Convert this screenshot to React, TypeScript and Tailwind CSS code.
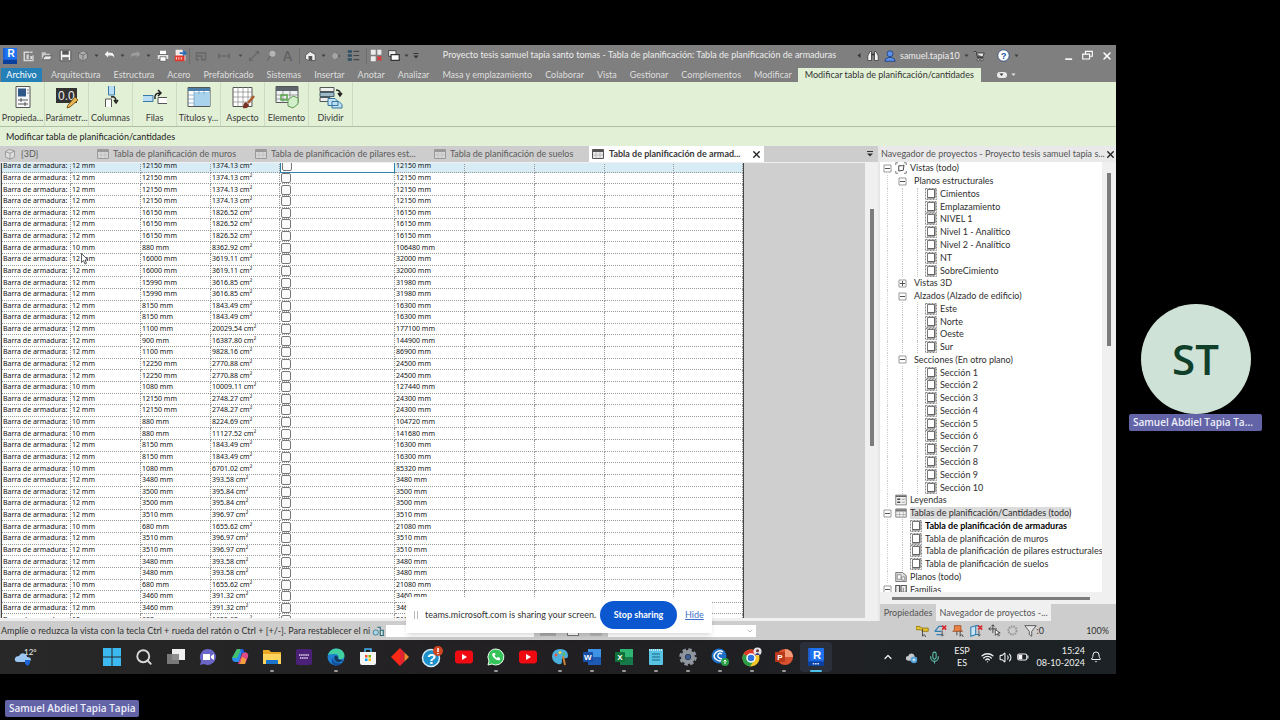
import React from "react";
import { Wifi, Volume2, Bell, ChevronUp, ChevronDown, Search, Mic, X } from "lucide-react";

type Bar = [diameter: string, length: string, area: string, total: string];

const bars: Bar[] = [
  ["12", "12150", "1374.13", "12150"],
  ["12", "12150", "1374.13", "12150"],
  ["12", "12150", "1374.13", "12150"],
  ["12", "12150", "1374.13", "12150"],
  ["12", "16150", "1826.52", "16150"],
  ["12", "16150", "1826.52", "16150"],
  ["12", "16150", "1826.52", "16150"],
  ["10", "880", "8362.92", "106480"],
  ["12", "16000", "3619.11", "32000"],
  ["12", "16000", "3619.11", "32000"],
  ["12", "15990", "3616.85", "31980"],
  ["12", "15990", "3616.85", "31980"],
  ["12", "8150", "1843.49", "16300"],
  ["12", "8150", "1843.49", "16300"],
  ["12", "1100", "20029.54", "177100"],
  ["12", "900", "16387.80", "144900"],
  ["12", "1100", "9828.16", "86900"],
  ["12", "12250", "2770.88", "24500"],
  ["12", "12250", "2770.88", "24500"],
  ["10", "1080", "10009.11", "127440"],
  ["12", "12150", "2748.27", "24300"],
  ["12", "12150", "2748.27", "24300"],
  ["10", "880", "8224.69", "104720"],
  ["10", "880", "11127.52", "141680"],
  ["12", "8150", "1843.49", "16300"],
  ["12", "8150", "1843.49", "16300"],
  ["10", "1080", "6701.02", "85320"],
  ["12", "3480", "393.58", "3480"],
  ["12", "3500", "395.84", "3500"],
  ["12", "3500", "395.84", "3500"],
  ["12", "3510", "396.97", "3510"],
  ["10", "680", "1655.62", "21080"],
  ["12", "3510", "396.97", "3510"],
  ["12", "3510", "396.97", "3510"],
  ["12", "3480", "393.58", "3480"],
  ["12", "3480", "393.58", "3480"],
  ["10", "680", "1655.62", "21080"],
  ["12", "3460", "391.32", "3460"],
  ["12", "3460", "391.32", "3460"],
  ["10", "680", "1655.62", "21080"],
];

type Node = {
  label: string;
  level: number;
  toggle?: "open" | "closed";
  icon?: "views" | "view" | "legend" | "schedule" | "sheets" | "families";
  bold?: boolean;
  selected?: boolean;
};

const tree: Node[] = [
  { label: "Vistas (todo)", level: 0, toggle: "open", icon: "views" },
  { label: "Planos estructurales", level: 1, toggle: "open" },
  { label: "Cimientos", level: 2, icon: "view" },
  { label: "Emplazamiento", level: 2, icon: "view" },
  { label: "NIVEL 1", level: 2, icon: "view" },
  { label: "Nivel 1 - Analítico", level: 2, icon: "view" },
  { label: "Nivel 2 - Analítico", level: 2, icon: "view" },
  { label: "NT", level: 2, icon: "view" },
  { label: "SobreCimiento", level: 2, icon: "view" },
  { label: "Vistas 3D", level: 1, toggle: "closed" },
  { label: "Alzados (Alzado de edificio)", level: 1, toggle: "open" },
  { label: "Este", level: 2, icon: "view" },
  { label: "Norte", level: 2, icon: "view" },
  { label: "Oeste", level: 2, icon: "view" },
  { label: "Sur", level: 2, icon: "view" },
  { label: "Secciones (En otro plano)", level: 1, toggle: "open" },
  { label: "Sección 1", level: 2, icon: "view" },
  { label: "Sección 2", level: 2, icon: "view" },
  { label: "Sección 3", level: 2, icon: "view" },
  { label: "Sección 4", level: 2, icon: "view" },
  { label: "Sección 5", level: 2, icon: "view" },
  { label: "Sección 6", level: 2, icon: "view" },
  { label: "Sección 7", level: 2, icon: "view" },
  { label: "Sección 8", level: 2, icon: "view" },
  { label: "Sección 9", level: 2, icon: "view" },
  { label: "Sección 10", level: 2, icon: "view" },
  { label: "Leyendas", level: 0, icon: "legend" },
  { label: "Tablas de planificación/Cantidades (todo)", level: 0, toggle: "open", icon: "schedule", selected: true },
  { label: "Tabla de planificación de armaduras", level: 1, icon: "view", bold: true },
  { label: "Tabla de planificación de muros", level: 1, icon: "view" },
  { label: "Tabla de planificación de pilares estructurales", level: 1, icon: "view" },
  { label: "Tabla de planificación de suelos", level: 1, icon: "view" },
  { label: "Planos (todo)", level: 0, icon: "sheets" },
  { label: "Familias", level: 0, toggle: "open", icon: "families" },
];

const ribbonTabs = [
  "Arquitectura", "Estructura", "Acero", "Prefabricado", "Sistemas", "Insertar", "Anotar", "Analizar",
  "Masa y emplazamiento", "Colaborar", "Vista", "Gestionar", "Complementos", "Modificar",
];

const Svg = ({ size = 14, box = 16, children }: { size?: number; box?: number; children: React.ReactNode }) => (
  <svg width={size} height={size} viewBox={`0 0 ${box} ${box}`} fill="none" className="shrink-0" aria-hidden="true">
    {children}
  </svg>
);

const Caret = ({ color = "#3c3c3c" }: { color?: string }) => (
  <svg width="5" height="4" viewBox="0 0 5 4" className="shrink-0" aria-hidden="true">
    <path d="M0.5 0.5h4L2.5 3z" fill={color} />
  </svg>
);

const RevitLogo = ({ size = 16, badge = false }: { size?: number; badge?: boolean }) => (
  <Svg size={size}>
    <path d="M1 0h13l1 1v14H1z" fill="#1a62d6" />
    <path d="M1 12h14v4H1z" fill="#0b3f9c" />
    <path d="M3 0h12v11H3z" fill="#1f72ef" />
    <text x="5.4" y="9.4" fontSize="10" fontWeight="700" fill="#fff" fontFamily="Liberation Sans, sans-serif">R</text>
    {badge && <path d="M5 14h6" stroke="#cfe0ff" strokeWidth="1.500" strokeDasharray="1.500 .6" />}
  </Svg>
);

/* Quick access toolbar */
const quickTools: { name: string; slot: string; icon: React.ReactNode }[] = [
  { name: "Inicio", slot: "w-[19px]", icon: <Svg size={12}><path d="M2 2h8v2H4v9h10V7h1.500v8H2z" fill="#d6d6d6" /><path d="M6 6h3v6H6zM11 8h3v4h-3z" fill="#d6d6d6" /><path d="M11 3h3" stroke="#d6d6d6" strokeWidth="2" /></Svg> },
  { name: "Abrir", slot: "w-[19px]", icon: <Svg size={12}><path d="M1 3h5l1 2h5v2H4l-3 6z" fill="#c8c8c8" /><path d="M5 8h10l-3 5H2z" fill="#e8e8e8" stroke="#555" /></Svg> },
  { name: "Guardar", slot: "w-[18px]", icon: <Svg size={13}><path d="M1.500 1.500h12l1 1v12h-13z" fill="#f2f2f2" stroke="#444" /><path d="M4 2h8v5H4z" fill="#555" /><path d="M4 10h8v4H4z" fill="#777" /></Svg> },
  { name: "Sincronizar", slot: "w-[17px]", icon: <Svg size={12}><path d="M8 1l6 3v7l-6 4-6-4V4z" fill="#aaa" stroke="#666" /><path d="M8 7l6-3M8 7v8M8 7L2 4" stroke="#666" /></Svg> },
  { name: "Opciones de sincronización", slot: "w-[11px]", icon: <Caret /> },
  { name: "Deshacer", slot: "w-[15px]", icon: <Svg size={11}><path d="M1 6l5-5v3h4q5 0 5 8q-1-4-5-4H6v3z" fill="#f4f4f4" /></Svg> },
  { name: "Lista deshacer", slot: "w-[11px]", icon: <Caret /> },
  { name: "Rehacer", slot: "w-[15px]", icon: <Svg size={11}><path d="M15 6l-5-5v3H6q-5 0-5 8q1-4 5-4h4v3z" fill="#9d9d9d" /></Svg> },
  { name: "Lista rehacer", slot: "w-[11px]", icon: <Caret /> },
  { name: "Imprimir", slot: "w-[17px]", icon: <Svg size={12}><path d="M4 1h8v5H4z" fill="#fff" /><path d="M1 6h14v6H1z" fill="#e6e6e6" /><path d="M4 9h8v6H4z" fill="#fff" stroke="#555" /><path d="M1 6h14" stroke="#555" /></Svg> },
  { name: "PDF", slot: "w-[18px]", icon: <Svg size={13}><path d="M2 1h8l4 4v9H2z" fill="#f4e9e6" /><path d="M1 8h12v7H1z" fill="#e2392b" /><path d="M7 5h7M11 2l4 3-4 3" stroke="#2e6fb5" strokeWidth="2" /><path d="M3 10v3M6 10v3M9 10v3" stroke="#fff" /></Svg> },
];

const quickTools2: { name: string; slot: string; icon: React.ReactNode }[] = [
  { name: "Medir", slot: "w-[22px]", icon: <Svg size={12}><path d="M2 4h12v9H9V8H2zM2 4v9h3" stroke="#676767" strokeWidth="2" /></Svg> },
  { name: "Cota", slot: "w-[23px]", icon: <Svg size={12}><path d="M1 5v6M15 5v6M1 8h14" stroke="#5f5f5f" strokeWidth="1.500" /></Svg> },
  { name: "Lista de cotas", slot: "w-[10px]", icon: <Caret color="#4a4a4a" /> },
  { name: "Alinear", slot: "w-[17px]", icon: <Svg size={12}><path d="M2 14L14 2M10 2h4v4M2 10v4h4" stroke="#666" strokeWidth="1.500" /></Svg> },
  { name: "Etiqueta", slot: "w-[18px]", icon: <Svg size={12}><circle cx="10" cy="5" r="4" fill="#b5b5b5" /><path d="M7 8l-4 6" stroke="#666" strokeWidth="1.500" /></Svg> },
  { name: "Texto", slot: "w-[15px]", icon: <span className="text-[13px] font-bold leading-3 text-[#616161]">A</span> },
];

const quickTools3: { name: string; slot: string; icon: React.ReactNode }[] = [
  { name: "Vista 3D", slot: "w-[19px]", icon: <Svg size={12}><path d="M2 7l6-5 7 4v8H6l-4-2z" fill="#eee" stroke="#444" /><path d="M6 8h5v6H6z" fill="#555" /></Svg> },
  { name: "Lista de vistas", slot: "w-[8px]", icon: <Caret /> },
  { name: "Sección", slot: "w-[17px]", icon: <Svg size={12}><path d="M8 3l6 5-6 5z" fill="#5c5c5c" /><circle cx="7" cy="8" r="4" fill="#a2a2a2" /></Svg> },
  { name: "Líneas finas", slot: "w-[18px]", icon: <Svg size={13}><path d="M1 3h5M1 8h5M1 13h5" stroke="#2d4f66" strokeWidth="3" /><path d="M8 3h7M8 8h7M8 13h7" stroke="#454545" strokeWidth="1.500" /></Svg> },
];

const quickTools4: { name: string; slot: string; icon: React.ReactNode }[] = [
  { name: "Cerrar inactivas", slot: "w-[18px]", icon: <Svg size={13}><path d="M1 1h6v6H1zM9 1h5v6H9zM1 9h6v6H1z" fill="#ececec" /><path d="M9 9l5 5M14 9l-5 5" stroke="#d83a3a" strokeWidth="2" /></Svg> },
  { name: "Cambiar ventana", slot: "w-[17px]", icon: <Svg size={13}><path d="M2 2h9v7H2z" fill="#eee" stroke="#333" /><path d="M5 7h10v7H5z" fill="#fff" stroke="#333" strokeWidth="1.500" /></Svg> },
  { name: "Lista de ventanas", slot: "w-[8px]", icon: <Caret /> },
  { name: "Personalizar", slot: "w-[12px]", icon: <Svg size={8}><path d="M3 3h10" stroke="#333" strokeWidth="2" /><path d="M3 7h10l-5 6z" fill="#333" /></Svg> },
];

const ToolGroup = ({ tools }: { tools: { name: string; slot: string; icon: React.ReactNode }[] }) => (
  <div className="flex items-center">
    {tools.map((tool) => (
      <button key={tool.name} aria-label={tool.name} className={`${tool.slot} h-5 flex items-center justify-center`}>
        {tool.icon}
      </button>
    ))}
  </div>
);

const Divider = () => <div className="h-4 w-px bg-[#6d6d6d]" />;

const TitleBar = () => (
  <header className="flex h-[23px] shrink-0 items-center bg-[#7f7f7f] pb-[2px] text-[#ececec]">
    <div className="flex shrink-0 items-center pl-[2px]">
      <RevitLogo />
      <ToolGroup tools={quickTools} />
      <Divider />
      <ToolGroup tools={quickTools2} />
      <div className="w-1" />
      <Divider />
      <ToolGroup tools={quickTools3} />
      <div className="w-1" />
      <Divider />
      <ToolGroup tools={quickTools4} />
    </div>
    <h1 className="min-w-0 flex-1 truncate pb-[2px] text-center text-[9px] leading-3">
      Proyecto tesis samuel tapia santo tomas - Tabla de planificación: Tabla de planificación de armaduras
    </h1>
    <div className="flex w-[259px] shrink-0 items-center">
      <svg width="4" height="5" viewBox="0 0 4 5" aria-hidden="true"><path d="M3.500 0v5L0.500 2.500z" fill="#333" /></svg>
      <button aria-label="Buscar" className="ml-1 flex w-4 justify-center">
        <Svg size={12}><path d="M2 6l2-4h2v12H1V8zM14 6l-2-4h-2v12h5V8z" fill="#f3f3f3" stroke="#333" /><path d="M6 6h4" stroke="#333" strokeWidth="2" /></Svg>
      </button>
      <button className="ml-[3px] flex items-center gap-1 text-[9px] leading-3">
        <Svg size={12}><circle cx="8" cy="5" r="4" fill="#5d90e8" stroke="#16377a" /><path d="M1 15q0-4 5-5h4q5 1 5 5z" fill="#5d90e8" stroke="#16377a" /></Svg>
        samuel.tapia10
        <Caret />
      </button>
      <button aria-label="Tienda" className="ml-1 flex">
        <Svg size={12}><path d="M1 2h3l2 8h8M4 4h11l-2 5H6" fill="#eee" stroke="#333" strokeWidth="1.200" /><circle cx="7" cy="13" r="1.500" fill="#eee" stroke="#333" /><circle cx="12" cy="13" r="1.500" fill="#eee" stroke="#333" /></Svg>
      </button>
      <button aria-label="Ayuda" className="ml-3 flex items-center gap-1">
        <Svg size={13}><circle cx="8" cy="8" r="7" fill="#fff" stroke="#26457c" /><text x="5" y="12" fontSize="11" fontWeight="700" fill="#1c4f9f" fontFamily="Liberation Sans, sans-serif">?</text></Svg>
        <Caret />
      </button>
      <div className="ml-auto flex items-center gap-2 pr-[3px]">
        <button aria-label="Minimizar"><Svg size={10}><path d="M2 13h11" stroke="#fff" strokeWidth="2.500" /></Svg></button>
        <button aria-label="Restaurar"><Svg size={11}><path d="M5 5V2h10v7h-4M1 6h10v7H1z" stroke="#fff" strokeWidth="1.600" /></Svg></button>
        <button aria-label="Cerrar"><X size={12} strokeWidth={3} color="#fff" /></button>
      </div>
    </div>
  </header>
);

const RibbonTabs = () => (
  <nav className="flex h-[14px] shrink-0 items-stretch bg-[#7f7f7f] pl-px text-[9px] leading-[14px] text-[#dedede]">
    <button className="w-[41px] bg-[#2580b8] text-white">Archivo</button>
    <div className="flex pl-[2px]">
      {ribbonTabs.map((tab) => (
        <button key={tab} className="pr-[6px] pl-[7px] whitespace-nowrap">{tab}</button>
      ))}
    </div>
    <button className="bg-[#e2f0d6] px-[7px] whitespace-nowrap text-[#333]">Modificar tabla de planificación/cantidades</button>
    <button aria-label="Minimizar cinta" className="ml-4 flex items-center gap-1">
      <span className="flex h-[6px] w-[10px] items-center justify-center rounded-sm bg-[#ececec]"><Caret /></span>
      <Caret color="#e5e5e5" />
    </button>
  </nav>
);

const ribbonTools: { label: string; icon: React.ReactNode }[] = [
  {
    label: "Propieda...",
    icon: <Svg size={24} box={24}><path d="M5 1.500h14v21H5z" fill="#f5f7f9" stroke="#555" /><path d="M7 3.500h8v8H7z" fill="#2f5787" /><path d="M16 5h2M16 8h2" stroke="#888" /><path d="M7 15h10M7 19h10M10 13v4M14 17v4" stroke="#555" /></Svg>,
  },
  {
    label: "Parámetr...",
    icon: <Svg size={24} box={24}><path d="M1 3h21v15H1z" fill="#333" /><text x="3" y="14.500" fontSize="12" fill="#eee" fontFamily="Liberation Sans, sans-serif">0.0</text><path d="M13 20l7-8 3 3-8 7-3 1z" fill="#e9b652" stroke="#7c5a1e" /></Svg>,
  },
  {
    label: "Columnas",
    icon: <Svg size={24} box={24}><path d="M9.500 1v9h6V1" fill="#b9ddf3" stroke="#3a78a8" /><path d="M6.500 22v-8h6v8" fill="#fff" stroke="#555" /><path d="M12 12q5-1 5 4M15 15l2 3 2-3" stroke="#222" strokeWidth="1.500" /></Svg>,
  },
  {
    label: "Filas",
    icon: <Svg size={24} box={24}><path d="M0 10.500h10v6H0" fill="#b9ddf3" stroke="#3a78a8" /><path d="M24 12.500h-9v6h9" fill="#fff" stroke="#555" /><path d="M12 14q-1-6 5-6M15 5l3 3-3 3" stroke="#222" strokeWidth="1.500" /></Svg>,
  },
  {
    label: "Títulos y...",
    icon: <Svg size={24} box={24}><path d="M1 2.500h22v19H1z" fill="#fff" stroke="#555" /><path d="M1 3h22v3H1z" fill="#4a7da8" /><path d="M7 7h16v14H7z" fill="#a9d2ec" /><path d="M1 10h6M1 14h6M1 18h6M7 6v15M12 6v3M17 6v3" stroke="#6b9cbc" strokeWidth=".7" /></Svg>,
  },
  {
    label: "Aspecto",
    icon: <Svg size={24} box={24}><path d="M2 2.500h19v19H2z" fill="#fff" stroke="#555" /><path d="M2 7h19M2 12h19M2 17h19M7 2v19M12 2v19M17 2v19" stroke="#888" strokeWidth=".7" /><path d="M23 11l-6 7" stroke="#a65a2d" strokeWidth="2.500" /><path d="M12 23q0-5 3-6l3 3q-1 4-6 3z" fill="#7a3322" /></Svg>,
  },
  {
    label: "Elemento",
    icon: <Svg size={24} box={24}><path d="M1 1.500h22v16H1z" fill="#eef2f3" stroke="#555" /><path d="M1 2h22v4H1z" fill="#5c6569" /><path d="M1 10h22M1 14h22M8 6v12M15 6v12" stroke="#777" strokeWidth=".7" /><path d="M6 10h6v5H6z" stroke="#59a84b" strokeWidth="1.500" /><path d="M13 15l5-4 5 2v6l-5 4-5-2z" fill="#d3efc9" stroke="#5e9b52" /></Svg>,
  },
  {
    label: "Dividir",
    icon: <Svg size={24} box={24}><path d="M1 2.500h14v4H1zM1 12.500h10v4H1z" fill="#eef0ef" stroke="#555" /><path d="M1 7.500h14v4H1z" fill="#9fb9c6" stroke="#44606e" /><path d="M9 13.500h7l3 3v4H9zM13 16.500h7l3 3v3.500H13z" fill="#bfe0f5" stroke="#35759f" /><path d="M17 5q5 0 4 5M19 8l2 3 2-3" stroke="#222" strokeWidth="1.500" /></Svg>,
  },
];

const Ribbon = () => (
  <section className="shrink-0 bg-[#e2f0d6] text-[#3a3a3a]">
    <div className="flex h-[45px] border-b border-[#aebfa5] pl-px">
      {ribbonTools.map((tool) => (
        <button key={tool.label} className="flex w-11 flex-col items-center justify-between border-r border-[#cddbc2] pt-[3px] pb-[2px] text-[9px] leading-3">
          {tool.icon}
          <span className="whitespace-nowrap">{tool.label}</span>
        </button>
      ))}
    </div>
    <p className="h-[19px] pl-[6px] text-[9px] leading-5 text-[#222]">Modificar tabla de planificación/cantidades</p>
  </section>
);

const ScheduleIcon = ({ active = false }: { active?: boolean }) => (
  <svg width="12" height="10" viewBox="0 0 12 10" fill="none" className="shrink-0" aria-hidden="true">
    <path d="M.5.5h11v9H.5z" fill={active ? "#e9e9e9" : "#d6d6d6"} stroke={active ? "#555" : "#9b9b9b"} />
    <path d="M1 1h10v2H1z" fill={active ? "#555" : "#999"} />
    <path d="M1 6h10M4 3v6M8 3v6" stroke={active ? "#aaa" : "#bbb"} strokeWidth=".6" />
  </svg>
);

const documentTabs = [
  { label: "Tabla de planificación de muros", slot: "w-[158px]" },
  { label: "Tabla de planificación de pilares est...", slot: "w-[179px]" },
  { label: "Tabla de planificación de suelos", slot: "w-[159px]" },
];

const DocumentTabs = () => (
  <nav className="flex h-4 shrink-0 items-stretch bg-[#cdcdcd] text-[9px] leading-4 text-[#5c5c5c]">
    <button className="flex w-[93px] items-center gap-[5px] pl-1">
      <Svg size={12}><path d="M2 5l5-3 7 2v8l-6 3-6-3z" fill="#ddd" stroke="#8a8a8a" /><path d="M2 5l6 2 6-3M8 7v8" stroke="#8a8a8a" /></Svg>
      {"{3D}"}
    </button>
    {documentTabs.map((tab) => (
      <button key={tab.label} className={`${tab.slot} flex items-center gap-1 pl-1 whitespace-nowrap`}>
        <ScheduleIcon />
        {tab.label}
      </button>
    ))}
    <button className="flex w-[175px] items-center gap-[5px] bg-white pl-[3px] font-bold whitespace-nowrap text-[#3a3a3a]">
      <ScheduleIcon active />
      Tabla de planificación de armad...
      <X size={11} strokeWidth={3} color="#222" className="mr-[2px] ml-auto" />
    </button>
    <button aria-label="Lista de pestañas" className="ml-auto flex items-center pr-1">
      <Svg size={8}><path d="M2 3h12" stroke="#333" strokeWidth="2" /><path d="M2 7h12l-6 6z" fill="#333" /></Svg>
    </button>
  </nav>
);

const cell = "border-r border-b border-dotted border-[#999] p-0 pl-px align-middle";

const ScheduleTable = () => (
  <table className="-mt-[2px] ml-px h-[465px] w-[743px] shrink-0 table-fixed border-separate border-spacing-0 border-x border-[#444] bg-white font-['Noto_Sans',sans-serif] text-[7px] leading-[10px] whitespace-nowrap text-[#111]">
    <colgroup>
      <col className="w-[69px]" />
      <col className="w-[70px]" />
      <col className="w-[70px]" />
      <col className="w-[69px]" />
      <col className="w-[115px]" />
      <col className="w-[70px]" />
      <col className="w-[70px]" />
      <col className="w-[70px]" />
      <col className="w-[69px]" />
      <col />
    </colgroup>
    <tbody>
      {bars.map(([diameter, length, area, total], i) => (
        <tr key={i} className={i === 0 ? "bg-[#d8ecf5]" : ""}>
          <td className={cell}>Barra de armadura:</td>
          <td className={cell}>{diameter} mm</td>
          <td className={cell}>{length} mm</td>
          <td className={cell}>{area} cm²</td>
          <td className={i === 0 ? "border-r border-b border-l border-[#2f82ac] bg-white p-0 pl-px" : cell}>
            <input
              type="checkbox"
              aria-label={`Seleccionar fila ${i + 1}`}
              className="block size-[10px] appearance-none rounded-[2px] border border-[#777] bg-[#fafafa]"
            />
          </td>
          <td className={cell}>{total} mm</td>
          <td className={cell} />
          <td className={cell} />
          <td className={cell} />
          <td className={cell} />
        </tr>
      ))}
    </tbody>
  </table>
);

const ScheduleView = () => (
  <main className="flex min-w-0 flex-1 flex-col">
    <DocumentTabs />
    <div className="relative mt-px mb-[3px] flex min-h-0 flex-1 overflow-hidden bg-[#cfcfcf]">
      <ScheduleTable />
      <svg width="8" height="12" viewBox="0 0 8 12" className="absolute top-[90px] left-[81px]" aria-hidden="true">
        <path d="M.5.5v9l2-2 1.500 3.500 1.500-.7L4 7h3z" fill="#fff" stroke="#333" strokeWidth=".8" />
      </svg>
      <div className="ml-auto flex w-[13px] justify-center bg-[#f0f0f0]">
        <div className="mt-[46px] h-[237px] w-1 bg-[#7c7c7c]" />
      </div>
    </div>
  </main>
);

const nodeIcons = {
  views: (
    <Svg size={12}><path d="M1 4V1h3M12 1h3v3M15 12v3h-3M4 15H1v-3" stroke="#555" /><path d="M5 5h5l2-1-1 7-6 1z" stroke="#444" strokeWidth="1.300" /></Svg>
  ),
  view: (
    <Svg size={12} box={12}><path d="M.5.5h11v11H.5z" stroke="#8a8a8a" strokeDasharray="2 1" /><path d="M2.500 1.500h7v8h-7z" fill="#fff" stroke="#777" /><path d="M2 10h8V1" stroke="#555" /></Svg>
  ),
  legend: (
    <Svg size={12}><path d="M1 1.500h14v13H1z" fill="#f2f2f2" stroke="#666" /><path d="M1 2h14v2H1z" fill="#666" /><path d="M3 7h4M3 11h4" stroke="#444" strokeWidth="2" /><path d="M9 7h4M9 11h4" stroke="#888" /></Svg>
  ),
  schedule: (
    <Svg size={12}><path d="M1 2.500h14v11H1z" fill="#f2f2f2" stroke="#666" /><path d="M1 3h14v3H1z" fill="#777" /><path d="M1 10h14M6 6v7M11 6v7" stroke="#aaa" /></Svg>
  ),
  sheets: (
    <Svg size={12}><path d="M1 2h9l5 4v8H1z" fill="#ddd" stroke="#555" /><path d="M3 5h5v6H3zM9 8h4v4H9z" fill="#fff" stroke="#777" /></Svg>
  ),
  families: (
    <Svg size={12}><path d="M1 2h5v12H1zM8 2h7v9H8z" fill="#eee" stroke="#555" strokeWidth="1.500" /><path d="M11 5v6" stroke="#555" /></Svg>
  ),
};

const Toggle = ({ state }: { state: "open" | "closed" }) => (
  <svg width="9" height="9" viewBox="0 0 9 9" fill="none" className="shrink-0" aria-hidden="true">
    <path d="M1 1h7v7H1z" fill="#fff" stroke="#999" />
    <path d={state === "open" ? "M2 4.500h5" : "M2 4.500h5M4.500 2v5"} stroke="#555" />
  </svg>
);

const TreeRow = ({ node }: { node: Node }) => (
  <li className="flex min-h-0 flex-1 items-center whitespace-nowrap">
    <span className="flex w-[15px] shrink-0 justify-center self-stretch">
      {node.level === 0 && node.toggle ? (
        <span className="flex items-center"><Toggle state={node.toggle} /></span>
      ) : (
        <span className="border-l border-dotted border-[#d0d0d0]" />
      )}
    </span>
    {node.level > 0 && (
      <span className="flex w-[15px] shrink-0 justify-center self-stretch">
        {node.toggle ? (
          <span className="flex items-center"><Toggle state={node.toggle} /></span>
        ) : (
          <span className="border-l border-dotted border-[#c4c4c4]" />
        )}
      </span>
    )}
    {node.level === 2 && (
      <span className="flex w-[15px] shrink-0 justify-center self-stretch">
        <span className="border-l border-dotted border-[#c4c4c4]" />
      </span>
    )}
    {node.icon && <span className="mr-[3px] shrink-0">{nodeIcons[node.icon]}</span>}
    {!node.icon && <span className="mr-[2px] w-[2px]" />}
    <span className={`${node.bold ? "font-bold text-black" : ""} ${node.selected ? "bg-[#dcdcdc]" : ""}`}>{node.label}</span>
  </li>
);

const ProjectBrowser = () => (
  <aside className="flex w-[238px] shrink-0 flex-col border-l-2 border-[#e6e6e6] bg-[#f0f0f0] text-[9px] text-[#2f2f2f]">
    <div className="flex h-4 shrink-0 items-center justify-between bg-[#e9e9e9] pr-px pl-px text-[#555]">
      <h2 className="leading-4 whitespace-nowrap">Navegador de proyectos - Proyecto tesis samuel tapia s...</h2>
      <button aria-label="Cerrar navegador"><X size={11} strokeWidth={3} color="#222" /></button>
    </div>
    <div className="flex min-h-0 flex-1">
      <div className="min-w-0 flex-1 overflow-hidden bg-white">
        <ul className="flex h-[434px] flex-col leading-3">
          {tree.map((node) => (
            <TreeRow key={node.label} node={node} />
          ))}
        </ul>
      </div>
      <div className="flex w-[14px] justify-center">
        <div className="mt-[11px] h-[173px] w-1 bg-[#7c7c7c]" />
      </div>
    </div>
    <div className="flex h-3 shrink-0 items-center pr-[26px] pl-3">
      <div className="h-[3px] flex-1 bg-[#7c7c7c]" />
    </div>
    <div className="flex h-[17px] shrink-0 bg-[#cdcdcd] leading-4 text-[#555]">
      <button className="w-[56px]">Propiedades</button>
      <button className="w-[115px] bg-[#f0f0f0] whitespace-nowrap">Navegador de proyectos -...</button>
    </div>
  </aside>
);

const statusTools: { name: string; icon: React.ReactNode }[] = [
  { name: "Seleccionar vínculos", icon: <Svg size={13}><path d="M0 3h5l2 2h8v4H8L6 7H0z" fill="#e9c42a" stroke="#8a7212" /><path d="M8 6v9l2-2 2 3" stroke="#333" /></Svg> },
  { name: "Seleccionar subyacentes", icon: <Svg size={13}><path d="M1 9l5-6h4M1 9h8M3 13h7" stroke="#2e7fb5" strokeWidth="1.500" /><path d="M10 2l5 5M15 2l-5 5" stroke="#d6282e" strokeWidth="2" /><path d="M10 8v7l2-2" stroke="#333" /></Svg> },
  { name: "Seleccionar fijados", icon: <Svg size={13}><path d="M3 2h8v5l2 2H1l2-2z" fill="#e98245" stroke="#a04c1b" /><path d="M6 9v5M10 8v7l2-2 2 3" stroke="#333" /></Svg> },
  { name: "Seleccionar por cara", icon: <Svg size={13}><path d="M1 4l6-2v11l-6 2zM7 2h4M7 13h4" stroke="#2e7fb5" strokeWidth="1.300" fill="#cbe5f3" /><path d="M10 2l5 5M15 2l-5 5" stroke="#d6282e" strokeWidth="2" /><path d="M11 8v7l2-2" stroke="#333" /></Svg> },
  { name: "Arrastrar", icon: <Svg size={13}><path d="M6 1v10M1 6h10M4 3l2-2 2 2M3 4L1 6l2 2" stroke="#333" /><path d="M9 7v7l2-2 2 3 1-1-2-3h3z" fill="#fff" stroke="#333" /></Svg> },
  { name: "Procesos", icon: <Svg size={13}><circle cx="8" cy="8" r="5" stroke="#999" strokeWidth="2.500" strokeDasharray="2 1" /></Svg> },
];

const StatusBar = () => (
  <footer className="flex h-[19px] shrink-0 items-center bg-[#cdcdcd] text-[9px] leading-4 whitespace-nowrap text-[#333]">
    <p className="w-[372px] pl-px">
      Amplíe o reduzca la vista con la tecla Ctrl + rueda del ratón o Ctrl + [+/-]. Para restablecer el ni
    </p>
    <button aria-label="Conjuntos de trabajo" className="mr-[2px]">
      <Svg size={12}><circle cx="5" cy="10" r="3.500" fill="#a9d6e8" stroke="#28677f" /><path d="M7 3h4v3M11 7h4v7h-4z" stroke="#28677f" strokeWidth="1.500" fill="#cfe8d0" /></Svg>
    </button>
    <input aria-label="Conjunto de trabajo activo" className="h-3 w-[148px] bg-white" />
    <div className="flex w-[74px] items-end justify-around self-stretch pb-1">
      <span className="h-1 w-4 bg-[#aaa]" />
      <span className="h-1 w-3 border border-[#777] bg-white" />
      <span className="h-1 w-3 bg-[#b5b5b5]" />
    </div>
    <div className="relative h-3 w-[148px] bg-white">
      <select aria-label="Opción de diseño" className="h-3 w-full appearance-none bg-transparent" />
      <ChevronDown size={8} color="#999" className="absolute top-[2px] right-[2px]" />
    </div>
    <div className="ml-auto flex items-center gap-[5px]">
      {statusTools.map((tool) => (
        <button key={tool.name} aria-label={tool.name}>{tool.icon}</button>
      ))}
      <button className="flex items-center text-[#333]">
        <Svg size={13}><path d="M1 2h14L9.500 9v6l-3-2V9z" fill="#e4e4e4" stroke="#444" /></Svg>:0
      </button>
    </div>
    <span className="w-[72px] pr-[7px] text-right">100%</span>
  </footer>
);

/* Taskbar icons, in the order in which they stand */
const YouTube = (
  <Svg size={18} box={18}><rect x="0" y="2.500" width="18" height="13" rx="3" fill="#f00b12" /><path d="M7 6l5 3-5 3z" fill="#fff" /></Svg>
);

const apps: { name: string; running?: boolean; active?: boolean; icon: React.ReactNode }[] = [
  { name: "Inicio", icon: <Svg size={18} box={18}><path d="M0 0h8.500v8.500H0zM9.500 0H18v8.500H9.500zM0 9.500h8.500V18H0zM9.500 9.500H18V18H9.500z" fill="#3cb9f0" /></Svg> },
  { name: "Buscar", icon: <Search size={18} strokeWidth={2.500} color="#d8d8d8" /> },
  { name: "Vista de tareas", icon: <Svg size={18} box={18}><path d="M5 1h13v11H5z" fill="#efefef" /><path d="M0 6h12v10H0z" fill="#838383" opacity=".9" /></Svg> },
  { name: "Chat", icon: <Svg size={18} box={18}><path d="M9 1a8 8 0 11-4 15l-4 1 1-4A8 8 0 019 1z" fill="#6a66c7" /><path d="M4 6h7v6H4zM12 8l3-2v6l-3-2z" fill="#fff" /></Svg> },
  { name: "Copilot", icon: <Svg size={18} box={18}><path d="M6 1h6l-4 13H5Q1 14 1 10z" fill="#2b8cf0" /><path d="M6 1h4L6 10H1z" fill="#43c06a" /><path d="M12 4h2q4 1 3 5l-3 7H7z" fill="#e04a86" /><path d="M11 9l4 2-1 5H9z" fill="#f2a03a" /><path d="M9 1h3l2 4h-3z" fill="#1d5fd6" /></Svg> },
  { name: "Explorador", running: true, icon: <Svg size={18} box={18}><path d="M0 2h6l2 2h10v6H0z" fill="#e8a825" /><path d="M0 6h18v10H0z" fill="#ffd35c" /><path d="M3 12h12v4H3z" fill="#1b76c9" /></Svg> },
  { name: "Banco Ripley", icon: <Svg size={18} box={18}><rect x="1" y="1" width="16" height="16" rx="2" fill="#4b2077" /><path d="M4 7h10M5 10h8" stroke="#e5d7ef" strokeWidth="1.500" strokeDasharray="1.500 .6" /></Svg> },
  { name: "Edge", running: true, icon: <Svg size={18} box={18}><circle cx="9" cy="9" r="8.500" fill="#1f7fd0" /><path d="M1 7Q3 1 9 .5q8 0 8.500 7.500-1 4-6 3 1-5-4-5Q3 6 1 7z" fill="#41cfa0" /><path d="M6 10q0 6 9 5-3 3-7 2.500Q2 15 6 10z" fill="#1350a0" /><path d="M7 9q2-3 4 0-1 3 5 3-3 3-6 2-3-2-3-5z" fill="#123a63" /></Svg> },
  { name: "Microsoft Store", icon: <Svg size={18} box={18}><path d="M6 4V1h6v3" stroke="#43b0ec" strokeWidth="1.500" /><path d="M1 4h16v11q0 2-2 2H3q-2 0-2-2z" fill="#f5f5f5" /><path d="M6 7h2.500v2.500H6z" fill="#f25022" /><path d="M9.500 7H12v2.500H9.500z" fill="#7fba00" /><path d="M6 10.500h2.500V13H6z" fill="#00a4ef" /><path d="M9.500 10.500H12V13H9.500z" fill="#ffb900" /></Svg> },
  { name: "Diamante", icon: <Svg size={18} box={18}><path d="M9 0v18L0 9z" fill="#ff2a16" /><path d="M9 0l4.500 4.500v9L9 18z" fill="#e3242e" /><path d="M13.500 4.500L18 9l-4.500 4.500z" fill="#ef8a2f" /></Svg> },
  { name: "Ayuda", icon: <Svg size={22} box={22}><circle cx="10" cy="12" r="8.500" fill="#1d8fc9" stroke="#d5eef8" strokeWidth="1.500" /><text x="6" y="17.500" fontSize="15" fontWeight="700" fill="#fff" fontFamily="Liberation Sans, sans-serif">?</text><circle cx="17" cy="5" r="5" fill="#cf4520" /><path d="M17 2v4M17 7v1" stroke="#fff" strokeWidth="1.500" /></Svg> },
  { name: "YouTube", icon: YouTube },
  { name: "WhatsApp", running: true, icon: <Svg size={18} box={18}><path d="M9 1a8 8 0 11-4 15l-4 1 1-4A8 8 0 019 1z" fill="#36c45a" stroke="#eafbee" /><path d="M6 5q-2 2 1 5t6 2l0-2-2-1-1 1q-2-1-2.500-2.500l1-1L8 5z" fill="#fff" /></Svg> },
  { name: "YouTube Music", icon: YouTube },
  { name: "Paint", running: true, icon: <Svg size={18} box={18}><path d="M9 1q8 0 8 7 0 3-4 2-3 0-2 3 0 4-4 3-6-2-6-8 1-7 8-7z" fill="#4bb0dd" /><circle cx="5" cy="7" r="1.500" fill="#e7553b" /><circle cx="9" cy="4.500" r="1.500" fill="#f7cf45" /><circle cx="13" cy="6" r="1.500" fill="#58bd5b" /><path d="M12 8l2 9" stroke="#c98135" strokeWidth="2" /></Svg> },
  { name: "Word", running: true, icon: <Svg size={18} box={18}><path d="M5 1h13v16H5z" fill="#3f93e6" /><path d="M5 9h13v8H5z" fill="#1e59b3" /><rect x="0" y="4" width="10" height="10" rx="1" fill="#174ea6" /><text x="1" y="12" fontSize="8" fontWeight="700" fill="#fff" fontFamily="Liberation Sans, sans-serif">W</text></Svg> },
  { name: "Excel", running: true, icon: <Svg size={18} box={18}><path d="M5 1h13v16H5z" fill="#2fb573" /><path d="M5 9h13v8H5z" fill="#16794a" /><rect x="0" y="4" width="10" height="10" rx="1" fill="#0f7038" /><text x="2.200" y="12" fontSize="8" fontWeight="700" fill="#fff" fontFamily="Liberation Sans, sans-serif">X</text></Svg> },
  { name: "Bloc de notas", running: true, icon: <Svg size={18} box={18}><rect x="2" y="1" width="14" height="16" rx="1" fill="#59c3e3" /><path d="M2 2h14" stroke="#bfeaf6" strokeWidth="2" strokeDasharray="1 1" /><path d="M5 6h8M5 9h8M5 12h8" stroke="#17688a" strokeWidth="1.200" /></Svg> },
  { name: "Configuración", running: true, icon: <Svg size={18} box={18}><circle cx="9" cy="9" r="7.500" stroke="#8e959e" strokeWidth="2.500" strokeDasharray="3.500 2.400" /><circle cx="9" cy="9" r="5" stroke="#8e959e" strokeWidth="4" /><circle cx="9" cy="9" r="2.500" fill="#3a5c94" /></Svg> },
  { name: "Cisco", running: true, icon: <Svg size={18} box={18}><circle cx="8" cy="8" r="7.500" fill="#1c6fc4" /><path d="M12 4Q8 1 4.500 5T6 12q3 2 6 0M11 6Q8 4 7 7t4 4" stroke="#fff" strokeWidth="1.400" /><circle cx="14" cy="14" r="4" fill="#27a045" /><path d="M14 12v4M12.500 13.500L14 12l1.500 1.500" stroke="#fff" /></Svg> },
  { name: "Chrome", running: true, icon: <Svg size={20} box={20}><circle cx="9" cy="11" r="8.500" fill="#f3c526" /><path d="M9 11L1.500 7A8.500 8.500 0 0116.500 7z" fill="#e2382b" /><path d="M9 11l-7.500-4A8.500 8.500 0 008 19.500l4-6z" fill="#2c9e4b" /><circle cx="9" cy="11" r="4" fill="#2f73e0" stroke="#fff" strokeWidth="1.500" /><circle cx="15.500" cy="4.500" r="4" fill="#e6e2ea" /><circle cx="15.500" cy="3.800" r="1.500" fill="#6a3a35" /><path d="M13 8q2.500-4 5 0z" fill="#39427c" /></Svg> },
  { name: "PowerPoint", running: true, icon: <Svg size={18} box={18}><circle cx="10" cy="9" r="8" fill="#d9522f" /><path d="M10 1a8 8 0 018 8h-8z" fill="#f39a78" /><rect x="0" y="4" width="10" height="10" rx="1" fill="#b83a1b" /><text x="2.200" y="12" fontSize="8" fontWeight="700" fill="#fff" fontFamily="Liberation Sans, sans-serif">P</text></Svg> },
  { name: "Revit", running: true, active: true, icon: <RevitLogo size={18} badge /> },
];

const Taskbar = () => (
  <nav className="flex h-[34px] shrink-0 items-center bg-linear-to-r from-[#282828] via-[#211f22] to-[#1c2225] text-[9px] text-[#efefef]">
    <button className="flex w-24 items-start pl-[14px]">
      <Svg size={20} box={20}><path d="M4 15q-4 0-3-4 1-2 4-2 2-4 6-2 2 1 2 3 4 0 4 3-1 2-4 2z" fill="#9cc7f2" /><path d="M11 13h5v3l-2 3-3-2z" fill="#1c63d4" /></Svg>
      <span className="-ml-[10px] text-[8px] leading-[10px]">12°</span>
    </button>
    {apps.map((app) => (
      <button
        key={app.name}
        aria-label={app.name}
        className={`relative flex h-[30px] w-8 items-center justify-center rounded-sm ${app.active ? "bg-[#2b2f3a]" : ""}`}
      >
        {app.icon}
        {app.running && (
          <span className={`absolute bottom-0 h-[2px] rounded-full ${app.active ? "w-3 bg-[#4cc2ea]" : "w-1 bg-[#9a9a9a]"}`} />
        )}
      </button>
    ))}
    <div className="ml-auto flex items-center pr-[14px]">
      <button aria-label="Iconos ocultos" className="flex w-6 justify-center"><ChevronUp size={12} strokeWidth={2.500} /></button>
      <button aria-label="OneDrive" className="flex w-[22px] justify-center">
        <Svg size={13}><path d="M4 12q-3 0-3-3t3-3q1-3 4-3t4 4q3 0 3 3t-3 2z" fill="#c3c8cc" /><circle cx="11" cy="11" r="4" fill="#4b9fd6" /><path d="M9 11h4M11 9v4" stroke="#fff" /></Svg>
      </button>
      <button aria-label="Micrófono" className="flex w-6 justify-center"><Mic size={13} color="#5fc3ae" /></button>
      <button className="w-8 text-center leading-3">ESP<br />ES</button>
      <button aria-label="Red, volumen y batería" className="flex w-[54px] items-center justify-center gap-[5px]">
        <Wifi size={13} strokeWidth={2.500} />
        <Volume2 size={13} />
        <Svg size={12}><rect x="1" y="4" width="12" height="8" rx="2" stroke="#eee" strokeWidth="1.500" /><path d="M2 5h5v6H2z" fill="#fff" /><path d="M14.500 6v4" stroke="#eee" strokeWidth="1.500" /></Svg>
      </button>
      <button className="w-[53px] text-right leading-3">15:24<br />08-10-2024</button>
      <button aria-label="Notificaciones" className="ml-[5px]"><Bell size={12} /></button>
    </div>
  </nav>
);

const SharingBar = () => (
  <div className="absolute bottom-[41px] left-[406px] flex h-9 w-[306px] items-center bg-white pl-2 text-[9px] text-[#333] shadow-md">
    <span className="h-2 w-1 border-x border-[#bbb]" />
    <p className="ml-[7px] w-[175px] whitespace-nowrap">teams.microsoft.com is sharing your screen.</p>
    <button className="h-7 w-[77px] rounded-full bg-[#0b57d0] text-[9px] font-bold text-white">Stop sharing</button>
    <a href="#" className="ml-2 text-[#3f6fc9] underline">Hide</a>
  </div>
);

const nameTag = "rounded-[2px] bg-[#6264a7] px-1 text-[10px] leading-[17px] font-semibold text-[#eeeef8]";

const App = () => (
  <div className="flex h-screen overflow-hidden bg-black font-[Lato,'Open_Sans',sans-serif]">
    <div className="flex min-w-0 flex-1 flex-col pt-[45px]">
      <div className="relative flex min-h-0 flex-1 flex-col overflow-hidden bg-[#f0f0f0]">
        <TitleBar />
        <RibbonTabs />
        <Ribbon />
        <div className="flex min-h-0 flex-1">
          <ScheduleView />
          <ProjectBrowser />
        </div>
        <StatusBar />
        <Taskbar />
        <SharingBar />
      </div>
      <div className="flex h-[46px] shrink-0 items-end px-[5px] pb-[3px] font-['Open_Sans',sans-serif]">
        <span className={nameTag}>Samuel Abdiel Tapia Tapia</span>
      </div>
    </div>
    <aside className="flex w-[164px] shrink-0 flex-col items-center justify-center pt-[14px] pr-[5px] font-['Open_Sans',sans-serif]">
      <div className="flex size-[110px] items-center justify-center rounded-full bg-[#cfe2d7] text-[42px] font-semibold text-[#103f2a]">ST</div>
      <span className={`${nameTag} w-[133px]`}>Samuel Abdiel Tapia Ta...</span>
    </aside>
  </div>
);

export default App;
